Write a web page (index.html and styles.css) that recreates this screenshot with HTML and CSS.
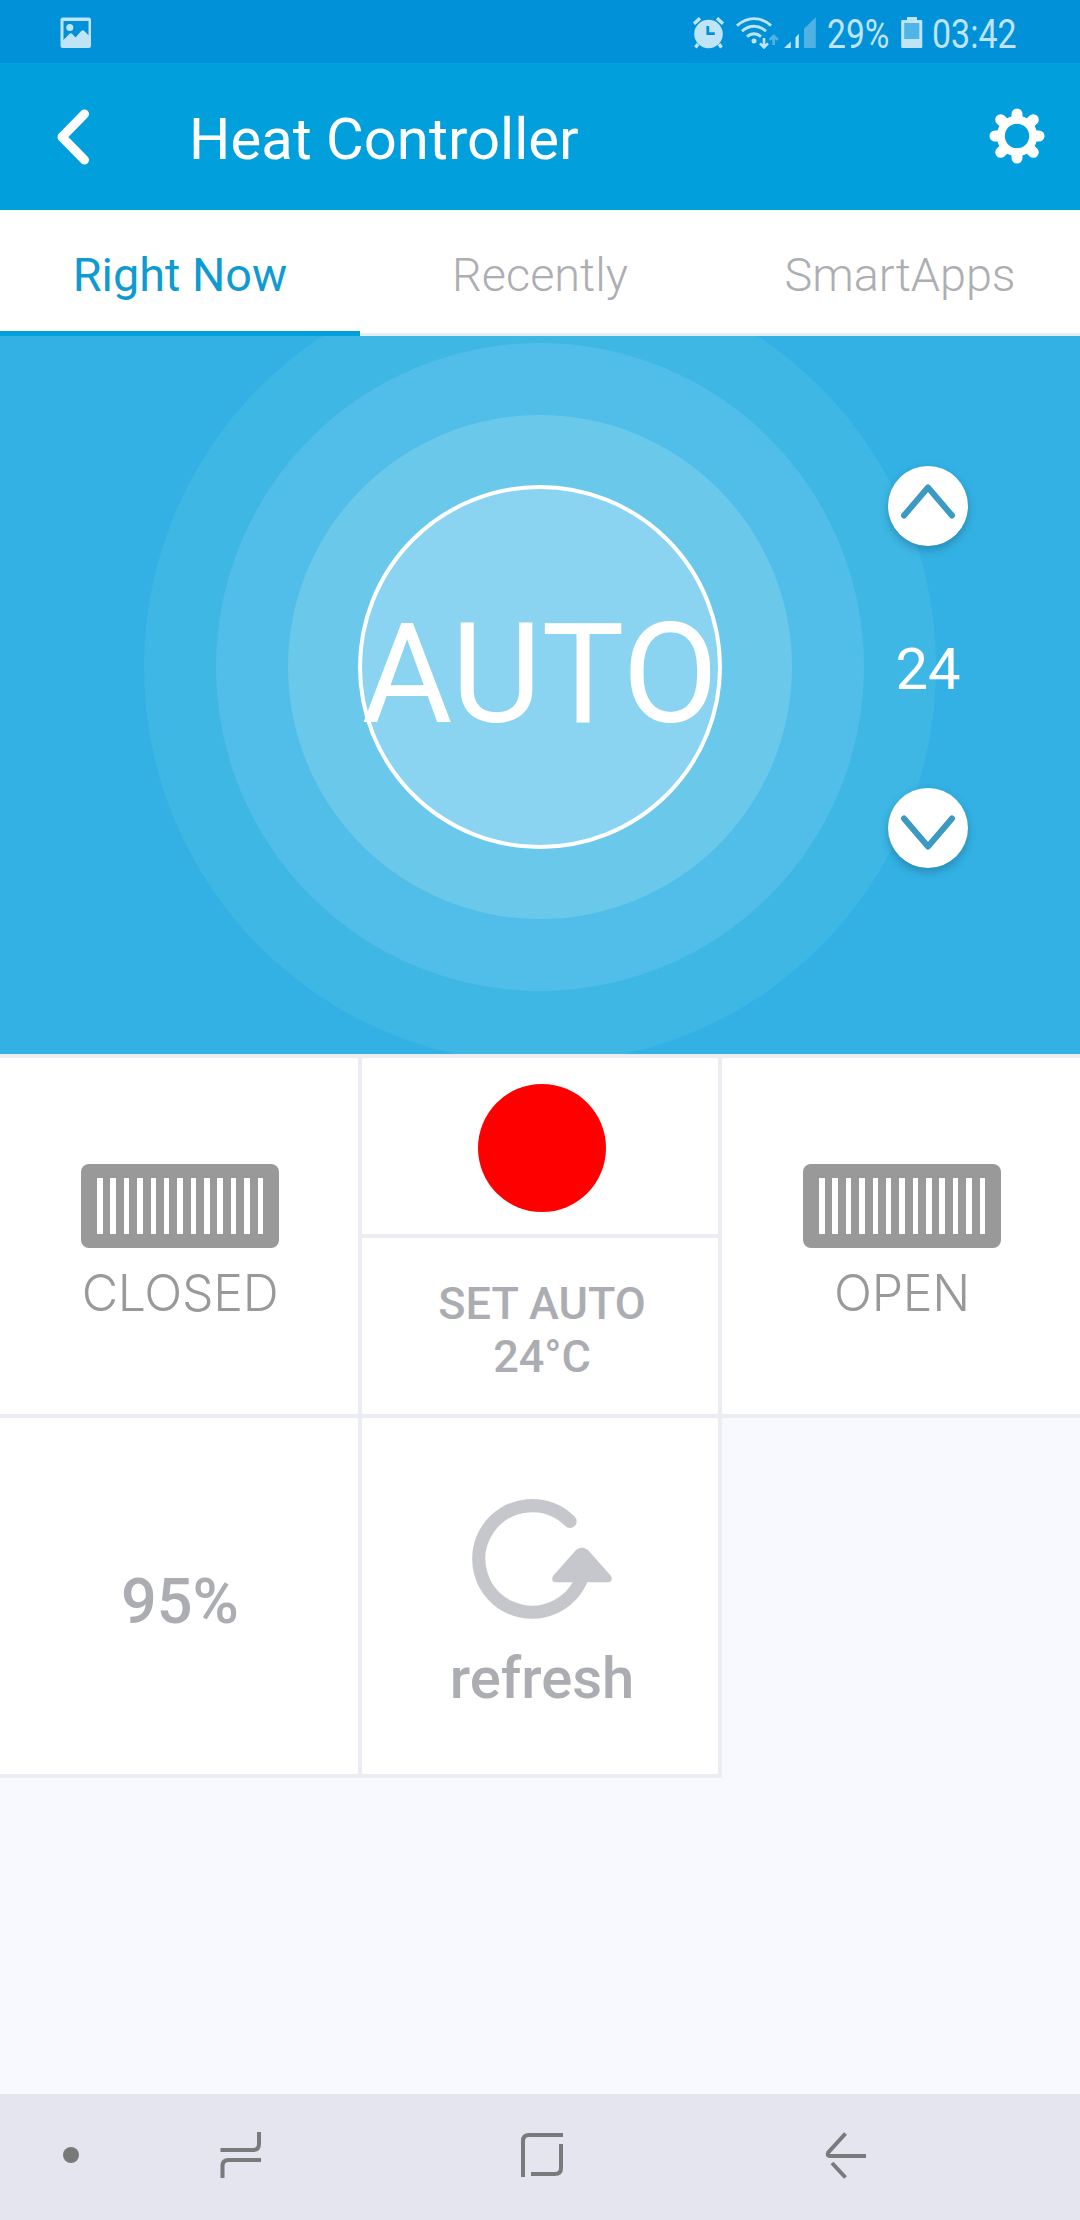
FILE: index.html
```html
<!DOCTYPE html>
<html lang="en">
<head>
<meta charset="utf-8">
<title>Heat Controller</title>
<link rel="stylesheet" href="styles.css">
</head>
<body>
<div class="screen">
  <div class="status">
    <svg class="ic-photo" width="32" height="32" viewBox="0 0 32 32"><path fill="#bfe4f6" fill-rule="evenodd" d="M3 .5h25.500a2.500 2.500 0 0 1 2.500 2.500v25.500a2.500 2.500 0 0 1-2.500 2.500H3a2.500 2.500 0 0 1-2.500-2.500V3A2.500 2.500 0 0 1 3 .5zM3.500 4v19l5.800-6q1.500-1.300 3 0l3.200 3.500 5.800-6.500q1.500-1.300 3 0l4.200 4.300V4z"/><circle cx="9.800" cy="10.500" r="3.500" fill="#bfe4f6"/></svg>
    <div class="status-right">
      <svg class="ic-alarm" width="32" height="32" viewBox="0 0 32 32" fill="none" stroke="#bfe4f6"><circle cx="15.500" cy="17" r="14.300" fill="#bfe4f6" stroke="none"/><path stroke-width="3.400" d="M1 6.800l6-5.600M30 6.800l-6-5.600M5 27l-2.500 3.500M26 27l2.500 3.500"/><path stroke="#0191d9" stroke-width="2.800" d="M14.800 9v7.700h7"/></svg>
      <svg class="ic-wifi" width="44" height="32" viewBox="0 0 44 32" fill="none" stroke="#bfe4f6" stroke-width="2.900"><path d="M1 8.600Q9 1.600 18 1.600t17 7M6 14.200q5.500-5 12-5t12 5M11 19.600q3.300-2.900 7-2.900t7 2.900"/><circle cx="18" cy="24" r="2.500" fill="#bfe4f6" stroke="none"/><path stroke-width="2.600" d="M28 21v9M24 26.400l4 4 4-4"/><path stroke="#4fb5e4" stroke-width="2.600" d="M37.700 28v-9M33.700 22.800l4-4 4 4"/></svg>
      <svg class="ic-signal" width="32" height="32" viewBox="0 0 32 32"><path fill="#bfe4f6" d="M0 31l6.800-6.500V31zM11.500 20.500l3.300-3.800V31h-3.300z"/><path fill="#4fb2e3" d="M20 11.800L31.800.3V31H20z"/></svg>
      <span class="stext pct">29%</span>
      <svg class="ic-batt" width="22" height="32" viewBox="0 0 22 32"><path fill="#bfe4f6" d="M6 0h10v3h4q1.300 0 1.300 1.300v25.400Q21.300 31 20 31H1.500Q.2 31 .2 29.700V4.300Q.2 3 1.500 3H6z"/><path fill="#4fb5e4" d="M3.200 6h15.100v16H3.200z"/></svg>
      <span class="stext clock">03:42</span>
    </div>
  </div>

  <header class="appbar">
    <svg class="ic-back" width="36" height="60" viewBox="0 0 36 60"><path d="M29.500 7L7 30l22.500 23" fill="none" stroke="#fff" stroke-width="9" stroke-linecap="round" stroke-linejoin="round"/></svg>
    <h1 class="title">Heat Controller</h1>
    <svg class="ic-gear" width="56" height="56" viewBox="-28 -28 56 56"><g stroke="#fff" stroke-width="11" stroke-linecap="round"><path d="M0-22v4M0 22v-4M-22 0h4M22 0h-4M-16.300-16.300l3 3M16.300-16.300l-3 3M-16.300 16.300l3-3M16.300 16.300l-3-3"/></g><circle r="16.200" fill="none" stroke="#fff" stroke-width="8"/></svg>
  </header>

  <nav class="tabs">
    <span class="tab active">Right Now</span>
    <span class="tab">Recently</span>
    <span class="tab">SmartApps</span>
  </nav>

  <section class="dial">
    <div class="ring r1"><div class="ring r2"><div class="ring r3"><div class="ring core">AUTO</div></div></div></div>
    <div class="stepper">
      <button class="step"><svg width="80" height="80" viewBox="0 0 80 80"><path d="M16 49.500L40 21.500 64 49.500"/></svg></button>
      <span class="setpoint">24</span>
      <button class="step"><svg width="80" height="80" viewBox="0 0 80 80"><path d="M16 30.500L40 58.500 64 30.500"/></svg></button>
    </div>
  </section>

  <main class="grid">
    <div class="tile vent-tile">
      <div class="vent"><i></i><i></i><i></i><i></i><i></i><i></i><i></i><i></i><i></i><i></i><i></i><i></i><i></i></div>
      <span class="vent-label">CLOSED</span>
    </div>
    <div class="split">
      <div class="tile half"><div class="led"></div></div>
      <div class="tile half set">SET AUTO<br>24°C</div>
    </div>
    <div class="tile vent-tile last">
      <div class="vent"><i></i><i></i><i></i><i></i><i></i><i></i><i></i><i></i><i></i><i></i><i></i><i></i><i></i></div>
      <span class="vent-label">OPEN</span>
    </div>
    <div class="tile level">95%</div>
    <div class="tile refresh">
      <svg width="144" height="124" viewBox="470 1497 144 124"><path d="M570 1521.400A53.300 53.300 0 1 0 584 1571" fill="none" stroke="#c6c7cd" stroke-width="13.300"/><circle cx="570" cy="1521.400" r="6.650" fill="#c6c7cd"/><path d="M576 1550Q582 1545 588 1550L611 1576Q613.500 1580.500 609 1582.300H555Q550.500 1581 553 1576z" fill="#c6c7cd"/></svg>
      <span>refresh</span>
    </div>
  </main>

  <footer class="navbar">
    <svg class="nb-dot" width="16" height="16" viewBox="0 0 16 16"><circle cx="8" cy="8" r="8" fill="#787a7a"/></svg>
    <svg class="nb-recent" width="42" height="48" viewBox="0 0 42 48"><path d="M.5 19H33q6 0 6-6V1M2.500 47V35q0-6 6-6H41"/></svg>
    <svg class="nb-home" width="42" height="46" viewBox="0 0 42 46"><path d="M2 45V9q0-6 6-6h34M10 42h24q6 0 6-6V12"/></svg>
    <svg class="nb-back" width="42" height="48" viewBox="0 0 42 48"><path d="M20.500 2.500L3.300 21.500Q1.500 25 5 25H41M7 32l13.500 14.500"/></svg>
  </footer>
</div>
</body>
</html>
```
FILE: styles.css
```css
* { box-sizing: border-box; }
body { margin: 0; font-family: Roboto, "Liberation Sans", sans-serif; }
svg { display: block; flex: none; }
.screen { width: 1080px; height: 2220px; display: flex; flex-direction: column; background: #f7f9fe; overflow: hidden; }

.status { height: 63px; flex: none; background: #0191d9; display: flex; justify-content: space-between; align-items: flex-start; padding: 17px 62px 0 60px; }
.status-right { display: flex; align-items: flex-start; }
.ic-wifi { margin-left: 11px; }
.ic-signal { margin-left: 4px; }
.stext { color: #bfe4f6; font-size: 40px; line-height: 36px; white-space: nowrap; transform-origin: 0 50%; }
.pct { width: 62px; margin: 0 12px 0 11px; transform: scaleX(0.84); }
.clock { width: 86px; margin-left: 9px; transform: scaleX(0.85); }

.appbar { height: 147px; flex: none; background: #01a0dd; display: flex; align-items: center; padding: 0 35px 0 55px; }
.title { margin: 4px auto 0 98px; font-size: 58px; line-height: 70px; font-weight: 400; color: #fff; }
.ic-gear { margin-bottom: 2px; }

.tabs { height: 126px; flex: none; background: #fff; display: grid; grid-template-columns: repeat(3, 360px); }
.tab { border-bottom: 3px solid #e3eef5; padding-top: 35px; line-height: 60px; font-size: 46.800px; font-weight: 300; color: #adaeb2; text-align: center; }
.tab.active { border-bottom: 5px solid #019fdb; color: #0f9bd2; font-weight: 400; }

.dial { height: 718px; flex: none; background: #33b1e4; display: grid; grid-template: 718px / 1080px; overflow: hidden; }
.ring { border-radius: 50%; display: grid; place-items: center; place-content: center; flex: none; }
.r1 { grid-area: 1 / 1; align-self: start; justify-self: center; width: 792px; height: 792px; margin-top: -65px; background: #3eb7e5; }
.r2 { width: 648px; height: 648px; background: #50bee8; }
.r3 { width: 504px; height: 504px; background: #6ac8eb; }
.core { width: 364px; height: 364px; border: 4px solid #fff; background: #8ad4f1; color: #fff; font-size: 139px; line-height: 150px; padding-top: 15px; }
.stepper { grid-area: 1 / 1; z-index: 1; margin: 129.500px 0 0 888px; width: 80px; height: 402px; display: flex; flex-direction: column; justify-content: space-between; align-items: center; }
.step { width: 80px; height: 80px; padding: 0; border: 0; border-radius: 50%; background: #fff; box-shadow: 0 4px 8px rgba(20, 80, 110, 0.4); }
.step path { fill: none; stroke: #3a9ac3; stroke-width: 6; stroke-linecap: round; stroke-linejoin: round; }
.setpoint { color: #fff; font-size: 58px; line-height: 68px; padding-top: 5px; }

.grid { display: grid; grid-template-columns: 362px 360px 358px; grid-template-rows: 360px 360px; border-top: 4px solid #ebedf2; height: 724px; flex: none; }
.tile { background: #fff; border: 0 solid #ebedf2; border-width: 0 4px 4px 0; }
.split { display: grid; grid-template-rows: 180px 180px; }
.vent-tile { display: flex; flex-direction: column; align-items: center; padding: 106px 0 0 2px; }
.last { border-right: 0; }
.vent { width: 198px; height: 84px; border-radius: 8px; background: #999; padding: 13.500px 16px 14px; display: flex; justify-content: space-between; }
.vent i { width: 5.500px; background: #fff; }
.vent-label { margin-top: 15px; font-family: Inter, "Liberation Sans", sans-serif; font-weight: 300; font-size: 50px; line-height: 60px; letter-spacing: -0.300px; color: #999; }
.half { display: flex; align-items: center; justify-content: center; text-align: center; }
.led { width: 128px; height: 128px; border-radius: 50%; background: #f00; margin: 4px 0 0 4px; }
.set { font-size: 45px; line-height: 53px; font-weight: 500; color: #acadb2; padding: 7px 0 0 4px; }
.level { display: flex; align-items: center; justify-content: center; font-size: 63px; font-weight: 500; color: #acadb2; padding: 11px 0 0 2px; }
.refresh { display: flex; flex-direction: column; align-items: center; padding: 79px 0 0 4px; font-size: 58px; font-weight: 500; color: #acadb2; }
.refresh span { line-height: 68px; margin-top: 23px; }

.navbar { height: 126px; flex: none; margin-top: auto; background: #e5e5ef; display: flex; align-items: center; padding: 0 0 4px 63px; }
.navbar path { fill: none; stroke: #787a7c; stroke-width: 4; }
.nb-recent { margin-left: 141px; }
.nb-home { margin-left: 259px; }
.nb-back { margin-left: 262px; }
```
